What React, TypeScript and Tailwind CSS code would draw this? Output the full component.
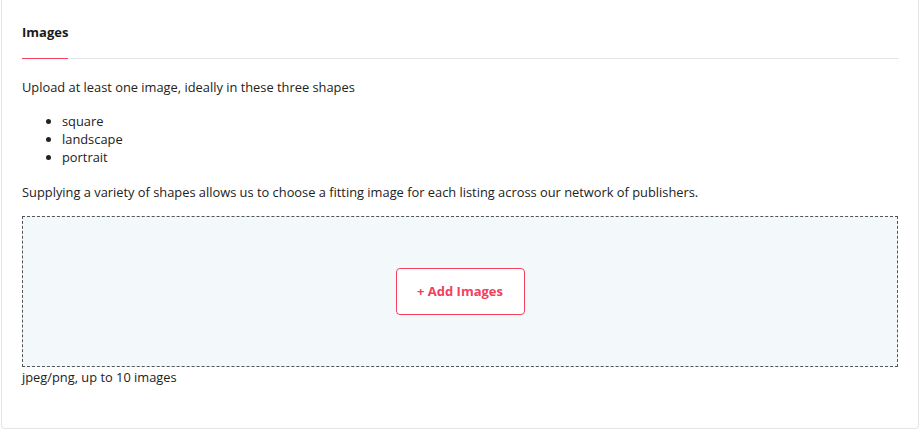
export default function App() {
  const shapes = ["square", "landscape", "portrait"];

  return (
    <div className="w-[920px] h-[430px] bg-white font-['Open_Sans',sans-serif] text-[#222]">
      <div className="ml-[1px] w-[918px] h-[429px] border-x border-b border-[#e3e6e8] rounded-b-[4px] bg-white px-[20px]">
        <div className="pt-[24px] pb-[18px]">
          <h2 className="text-[13px] leading-[16px] font-bold text-[#1a1a1a]">Images</h2>
        </div>
        <div className="flex h-px mr-[-1px]">
          <div className="w-[46px] bg-[#f2405d]" />
          <div className="flex-1 bg-[#e3e7e8]" />
        </div>

        <p className="mt-[19px] text-[12.85px] leading-[18px]">
          Upload at least one image, ideally in these three shapes
        </p>
        <ul className="mt-[16px] pl-[40px] list-disc text-[12.85px] leading-[18px]">
          {shapes.map((s) => (
            <li key={s}>{s}</li>
          ))}
        </ul>
        <p className="mt-[17px] text-[12.85px] leading-[18px]">
          Supplying a variety of shapes allows us to choose a fitting image for each listing across
          our network of publishers.
        </p>

        <div className="mt-[15px] h-[151px] border border-dashed border-[#555] bg-[#f3f9fb] flex items-center justify-center">
          <button className="w-[129px] h-[47px] rounded-[4px] border border-[#f2405d] bg-white text-[13px] font-bold text-[#f2405d]">
            + Add Images
          </button>
        </div>
        <p className="mt-[1px] text-[12.85px] leading-[18px]">jpeg/png, up to 10 images</p>
      </div>
    </div>
  );
}
